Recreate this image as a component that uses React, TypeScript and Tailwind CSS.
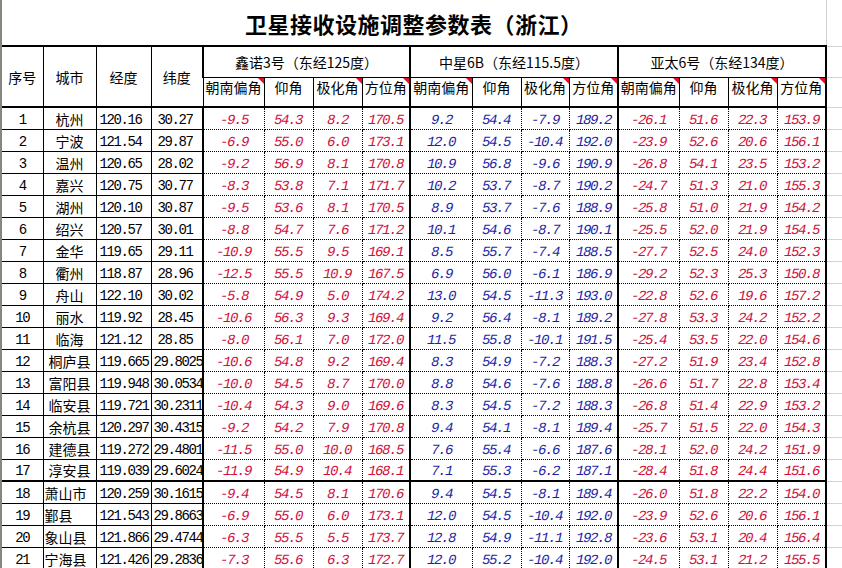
import React from 'react';

type Row = [string, string, string, string, string[], string[], string[]];

const rows: Row[] = [
  ['1', '杭州', '120.16', '30.27', ['-9.5', '54.3', '8.2', '170.5'], ['9.2', '54.4', '-7.9', '189.2'], ['-26.1', '51.6', '22.3', '153.9']],
  ['2', '宁波', '121.54', '29.87', ['-6.9', '55.0', '6.0', '173.1'], ['12.0', '54.5', '-10.4', '192.0'], ['-23.9', '52.6', '20.6', '156.1']],
  ['3', '温州', '120.65', '28.02', ['-9.2', '56.9', '8.1', '170.8'], ['10.9', '56.8', '-9.6', '190.9'], ['-26.8', '54.1', '23.5', '153.2']],
  ['4', '嘉兴', '120.75', '30.77', ['-8.3', '53.8', '7.1', '171.7'], ['10.2', '53.7', '-8.7', '190.2'], ['-24.7', '51.3', '21.0', '155.3']],
  ['5', '湖州', '120.10', '30.87', ['-9.5', '53.6', '8.1', '170.5'], ['8.9', '53.7', '-7.6', '188.9'], ['-25.8', '51.0', '21.9', '154.2']],
  ['6', '绍兴', '120.57', '30.01', ['-8.8', '54.7', '7.6', '171.2'], ['10.1', '54.6', '-8.7', '190.1'], ['-25.5', '52.0', '21.9', '154.5']],
  ['7', '金华', '119.65', '29.11', ['-10.9', '55.5', '9.5', '169.1'], ['8.5', '55.7', '-7.4', '188.5'], ['-27.7', '52.5', '24.0', '152.3']],
  ['8', '衢州', '118.87', '28.96', ['-12.5', '55.5', '10.9', '167.5'], ['6.9', '56.0', '-6.1', '186.9'], ['-29.2', '52.3', '25.3', '150.8']],
  ['9', '舟山', '122.10', '30.02', ['-5.8', '54.9', '5.0', '174.2'], ['13.0', '54.5', '-11.3', '193.0'], ['-22.8', '52.6', '19.6', '157.2']],
  ['10', '丽水', '119.92', '28.45', ['-10.6', '56.3', '9.3', '169.4'], ['9.2', '56.4', '-8.1', '189.2'], ['-27.8', '53.3', '24.2', '152.2']],
  ['11', '临海', '121.12', '28.85', ['-8.0', '56.1', '7.0', '172.0'], ['11.5', '55.8', '-10.1', '191.5'], ['-25.4', '53.5', '22.0', '154.6']],
  ['12', '桐庐县', '119.665', '29.8025', ['-10.6', '54.8', '9.2', '169.4'], ['8.3', '54.9', '-7.2', '188.3'], ['-27.2', '51.9', '23.4', '152.8']],
  ['13', '富阳县', '119.948', '30.0534', ['-10.0', '54.5', '8.7', '170.0'], ['8.8', '54.6', '-7.6', '188.8'], ['-26.6', '51.7', '22.8', '153.4']],
  ['14', '临安县', '119.721', '30.2311', ['-10.4', '54.3', '9.0', '169.6'], ['8.3', '54.5', '-7.2', '188.3'], ['-26.8', '51.4', '22.9', '153.2']],
  ['15', '余杭县', '120.297', '30.4315', ['-9.2', '54.2', '7.9', '170.8'], ['9.4', '54.1', '-8.1', '189.4'], ['-25.7', '51.5', '22.0', '154.3']],
  ['16', '建德县', '119.272', '29.4801', ['-11.5', '55.0', '10.0', '168.5'], ['7.6', '55.4', '-6.6', '187.6'], ['-28.1', '52.0', '24.2', '151.9']],
  ['17', '淳安县', '119.039', '29.6024', ['-11.9', '54.9', '10.4', '168.1'], ['7.1', '55.3', '-6.2', '187.1'], ['-28.4', '51.8', '24.4', '151.6']],
  ['18', '萧山市', '120.259', '30.1615', ['-9.4', '54.5', '8.1', '170.6'], ['9.4', '54.5', '-8.1', '189.4'], ['-26.0', '51.8', '22.2', '154.0']],
  ['19', '鄞县', '121.543', '29.8663', ['-6.9', '55.0', '6.0', '173.1'], ['12.0', '54.5', '-10.4', '192.0'], ['-23.9', '52.6', '20.6', '156.1']],
  ['20', '象山县', '121.866', '29.4744', ['-6.3', '55.5', '5.5', '173.7'], ['12.8', '54.9', '-11.1', '192.8'], ['-23.6', '53.1', '20.4', '156.4']],
  ['21', '宁海县', '121.426', '29.2836', ['-7.3', '55.6', '6.3', '172.7'], ['12.0', '55.2', '-10.4', '192.0'], ['-24.5', '53.1', '21.2', '155.5']],
];

const groups = ['鑫诺3号（东经125度）', '中星6B（东经115.5度）', '亚太6号（东经134度）'];
const subHeads = [
  { label: '朝南偏角', mark: true },
  { label: '仰角', mark: false },
  { label: '极化角', mark: true },
  { label: '方位角', mark: true },
];
const widths = [41, 53, 55, 52, 61, 49, 49, 48, 62, 49, 48, 49, 61, 49, 49, 49, 16];

const cn = "font-['Noto_Sans_CJK_SC',sans-serif] text-[14px] leading-[16px]";
const num = "font-['Liberation_Mono',monospace] text-[14px] leading-[16px] tracking-[-1.4px]";
const grid = 'border-b border-[#d4d4d4]';

// little red comment marker, like in excel
const Mark = () => (
  <span className="absolute top-0 right-0 h-0 w-0 border-l-[6px] border-t-[6px] border-l-transparent border-t-[#e0102a]" />
);

export default function App() {
  return (
    <div className="h-[568px] w-[842px] overflow-hidden border-l-2 border-[#86867e] bg-white text-black">
      <table className="table-fixed border-collapse" style={{ width: 840 }}>
        <colgroup>
          {widths.map((w, i) => (
            <col key={i} style={{ width: w }} />
          ))}
        </colgroup>
        <tbody>
          <tr className="h-[46px]">
            <td
              colSpan={16}
              className="border-r border-b-2 border-r-[#cfcfcf] border-b-black p-0 text-center align-middle font-['Noto_Sans_CJK_SC',sans-serif] text-[22px] leading-[28px] font-bold tracking-[0.5px]"
            >
              卫星接收设施调整参数表（浙江）
            </td>
            <td className={grid} />
          </tr>
          <tr className="h-[31px]">
            {['序号', '城市', '经度', '纬度'].map((h) => (
              <td
                key={h}
                rowSpan={2}
                className={`border-r border-b-2 border-black p-0 text-center align-middle ${cn}`}
              >
                {h}
              </td>
            ))}
            {groups.map((g, i) => (
              <td
                key={g}
                colSpan={4}
                className={`border-b border-black p-0 text-center align-middle ${cn} ${i === 0 ? 'border-l-2' : ''} border-r-2`}
              >
                {g}
              </td>
            ))}
            <td className={grid} />
          </tr>
          <tr className="h-[30px]">
            {groups.map((g) =>
              subHeads.map((s, j) => (
                <td
                  key={g + s.label}
                  className={`relative border-b-2 border-black p-0 pt-[1px] text-center align-top ${cn} ${j === 3 ? 'border-r-2' : 'border-r'}`}
                >
                  {s.label}
                  {s.mark && <Mark />}
                </td>
              ))
            )}
            <td className={grid} />
          </tr>
          {rows.map((r, ri) => {
            const [idx, city, lon, lat, g1, g2, g3] = r;
            const long = ri >= 11;
            const lastBlock = ri === 16;
            const bottom = lastBlock ? 'border-b-2' : 'border-b';
            const plain = `${bottom} border-r border-black p-0 align-middle`;
            return (
              <tr key={idx} className="h-[22px]">
                <td className={`${plain} pt-[3px] text-center ${num}`}>{idx}</td>
                <td
                  className={`${plain} pt-[1px] ${cn} ${ri >= 17 ? 'pl-[1px] text-left' : 'text-center'}`}
                >
                  {city}
                </td>
                <td className={`${plain} pt-[3px] pl-[3px] text-left ${num}`}>{lon}</td>
                <td className={`${plain} pt-[3px] ${long ? 'pl-[2px]' : 'pl-[6px]'} text-left ${num}`}>{lat}</td>
                {[g1, g2, g3].map((vals, gi) =>
                  vals.map((v, vi) => (
                    <td
                      key={`${gi}-${vi}`}
                      className={[
                        bottom,
                        'border-black p-0 pt-[3px] text-center align-middle',
                        lastBlock ? 'border-solid' : 'border-dotted',
                        vi === 3 ? 'border-r-2 [border-right-style:solid]' : 'border-r [border-right-style:dotted]',
                        gi === 0 && vi === 0 ? 'border-l-2 [border-left-style:solid]' : '',
                        gi === 1 ? 'text-[#1f1fa6]' : 'text-[#d0103a]',
                        num,
                      ].join(' ')}
                    >
                      <span className="inline-block -skew-x-12">{v}</span>
                    </td>
                  ))
                )}
                <td className={grid} />
              </tr>
            );
          })}
        </tbody>
      </table>
    </div>
  );
}
